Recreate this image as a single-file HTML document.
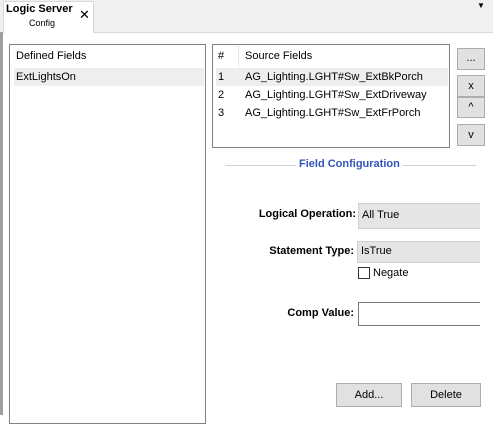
<!DOCTYPE html>
<html><head><style>
body{margin:0;width:493px;height:415px;overflow:hidden;background:#fff;font-family:"Liberation Sans",sans-serif;font-size:11px;color:#000;position:relative}
.a{position:absolute}
.btn{position:absolute;background:#e1e1e1;border:1px solid #adadad;box-sizing:border-box;text-align:center}
</style></head><body>
<div class="a" style="left:0;top:0;width:493px;height:32px;background:#f0f0f0;border-bottom:1px solid #d9d9d9"></div>
<div class="a" style="left:3px;top:1px;width:91px;height:32px;background:#fff;border:1px solid #d9d9d9;border-bottom:none;box-sizing:border-box"></div>
<div class="a" style="left:6px;top:3px;font-weight:bold;font-size:11px">Logic Server</div>
<div class="a" style="left:29px;top:18px;font-size:9px">Config</div>
<div class="a" style="left:79px;top:8px;font-size:13px;line-height:13px">✕</div>
<div class="a" style="left:477px;top:1px;font-size:8px">▼</div>
<div class="a" style="left:0;top:32px;width:3px;height:383px;background:#a0a0a0"></div>
<div class="a" style="left:9px;top:44px;width:197px;height:380px;border:1px solid #828282;box-sizing:border-box"></div>
<div class="a" style="left:16px;top:50px">Defined Fields</div>
<div class="a" style="left:14px;top:68px;width:190px;height:18px;background:#eeeeee"></div>
<div class="a" style="left:16px;top:71px">ExtLightsOn</div>
<div class="a" style="left:212px;top:44px;width:238px;height:104px;border:1px solid #828282;box-sizing:border-box"></div>
<div class="a" style="left:238px;top:46px;width:1px;height:21px;background:#e5e5e5"></div>
<div class="a" style="left:218px;top:50px">#</div>
<div class="a" style="left:245px;top:50px">Source Fields</div>
<div class="a" style="left:216px;top:68px;width:232px;height:18px;background:#eeeeee"></div>
<div class="a" style="left:218px;top:71px">1</div><div class="a" style="left:245px;top:71px">AG_Lighting.LGHT#Sw_ExtBkPorch</div>
<div class="a" style="left:218px;top:89px">2</div><div class="a" style="left:245px;top:89px">AG_Lighting.LGHT#Sw_ExtDriveway</div>
<div class="a" style="left:218px;top:107px">3</div><div class="a" style="left:245px;top:107px">AG_Lighting.LGHT#Sw_ExtFrPorch</div>
<div class="btn" style="left:457px;top:48px;width:28px;height:22px;line-height:18px">...</div>
<div class="btn" style="left:457px;top:75px;width:28px;height:22px;line-height:20px">x</div>
<div class="btn" style="left:457px;top:97px;width:28px;height:21px;line-height:19px">^</div>
<div class="btn" style="left:457px;top:124px;width:28px;height:22px;line-height:20px">v</div>
<div class="a" style="left:225px;top:165px;width:251px;height:1px;background:#d0d0d0"></div>
<div class="a" style="left:296px;top:158px;padding:0 3px;background:#fff;color:#3355bb;font-weight:bold">Field Configuration</div>
<div class="a" style="left:200px;top:208px;width:156px;text-align:right;font-weight:bold">Logical Operation:</div>
<div class="a" style="left:358px;top:203px;width:122px;height:26px;background:#e5e5e5;border:1px solid #cfcfcf;border-right:none;box-sizing:border-box"></div>
<div class="a" style="left:362px;top:209px">All True</div>
<div class="a" style="left:200px;top:245px;width:154px;text-align:right;font-weight:bold">Statement Type:</div>
<div class="a" style="left:357px;top:241px;width:123px;height:22px;background:#e5e5e5;border:1px solid #cfcfcf;border-right:none;box-sizing:border-box"></div>
<div class="a" style="left:361px;top:245px">IsTrue</div>
<div class="a" style="left:358px;top:267px;width:12px;height:12px;border:1px solid #333;box-sizing:border-box;background:#fff"></div>
<div class="a" style="left:373px;top:267px">Negate</div>
<div class="a" style="left:200px;top:307px;width:154px;text-align:right;font-weight:bold">Comp Value:</div>
<div class="a" style="left:358px;top:302px;width:122px;height:24px;border:1px solid #7a7a7a;border-right:none;box-sizing:border-box"></div>
<div class="btn" style="left:336px;top:383px;width:66px;height:24px;line-height:22px">Add...</div>
<div class="btn" style="left:411px;top:383px;width:70px;height:24px;line-height:22px">Delete</div>
</body></html>
